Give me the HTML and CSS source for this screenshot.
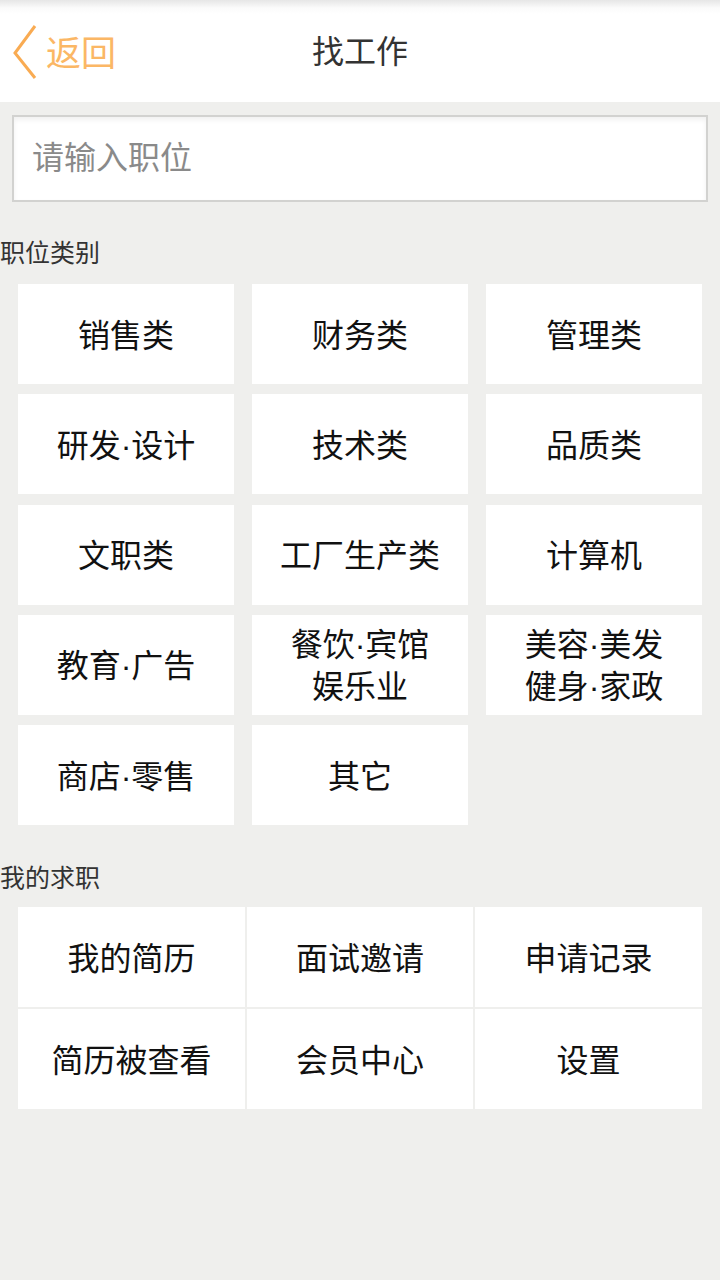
FILE: index.html
```html
<!DOCTYPE html>
<html lang="zh-CN">
<head>
    <meta charset="UTF-8">
    <meta name="viewport" content="width=720">
    <title>找工作</title>
    <link rel="stylesheet" href="styles.css">
</head>
<body>
    <header class="top-bar">
        <a class="back-link" href="#">
            <svg class="back-icon" width="26" height="56" viewBox="0 0 26 56">
                <polyline points="23,2 3,29 23,54" fill="none" stroke="#f9ab52" stroke-width="3"/>
            </svg>
            <span class="back-text">返回</span>
        </a>
        <h1 class="top-title">找工作</h1>
    </header>

    <div class="search-wrap">
        <input class="search-input" type="text" placeholder="请输入职位">
    </div>

    <h2 class="section-title">职位类别</h2>
    <div class="category-grid">
        <div class="category-item">销售类</div>
        <div class="category-item">财务类</div>
        <div class="category-item">管理类</div>
        <div class="category-item">研发·设计</div>
        <div class="category-item">技术类</div>
        <div class="category-item">品质类</div>
        <div class="category-item">文职类</div>
        <div class="category-item">工厂生产类</div>
        <div class="category-item">计算机</div>
        <div class="category-item">教育·广告</div>
        <div class="category-item">餐饮·宾馆<br>娱乐业</div>
        <div class="category-item">美容·美发<br>健身·家政</div>
        <div class="category-item">商店·零售</div>
        <div class="category-item">其它</div>
    </div>

    <h2 class="section-title section-title-mine">我的求职</h2>
    <div class="mine-grid">
        <div class="mine-item">我的简历</div>
        <div class="mine-item">面试邀请</div>
        <div class="mine-item">申请记录</div>
        <div class="mine-item">简历被查看</div>
        <div class="mine-item">会员中心</div>
        <div class="mine-item">设置</div>
    </div>
</body>
</html>
```

FILE: styles.css
```css
* {
    margin: 0;
    padding: 0;
    box-sizing: border-box;
}

body {
    font-family: "Liberation Sans", "Noto Sans CJK SC", sans-serif;
    background: #efefed;
    color: #111;
    width: 720px;
    min-height: 1280px;
}

.top-bar {
    position: relative;
    height: 102px;
    background: linear-gradient(180deg, #e6e6e6 0px, #fbfbfb 8px, #ffffff 14px);
    display: flex;
    align-items: center;
    justify-content: center;
}

.back-link {
    position: absolute;
    left: 12px;
    top: 22px;
    display: flex;
    align-items: center;
    text-decoration: none;
}

.back-text {
    margin-left: 8px;
    padding-top: 4px;
    font-size: 35px;
    line-height: 56px;
    color: #fbb765;
}

.top-title {
    font-size: 32px;
    font-weight: normal;
    color: #333;
    line-height: 1;
    margin-top: 2px;
}

.search-wrap {
    padding: 13px 12px 0 12px;
}

.search-input {
    display: block;
    width: 100%;
    height: 87px;
    border: 2px solid #d2d2d0;
    background: #fff;
    box-shadow: inset 0 3px 5px rgba(0, 0, 0, 0.06);
    padding: 0 18px;
    font-family: inherit;
    font-size: 32px;
    color: #333;
    outline: none;
}

.search-input::placeholder {
    color: #8a8a8a;
}

.section-title {
    font-size: 25px;
    font-weight: normal;
    color: #333;
    line-height: 36px;
    margin-top: 33px;
    height: 49px;
}

.section-title-mine {
    margin-top: 35px;
    height: 47px;
}

.category-grid {
    display: grid;
    grid-template-columns: repeat(3, 216px);
    grid-auto-rows: 100px;
    column-gap: 18px;
    row-gap: 10.3px;
    padding: 0 18px;
}

.category-item,
.mine-item {
    background: #fff;
    display: flex;
    align-items: center;
    justify-content: center;
    text-align: center;
    padding-top: 3px;
    font-size: 32px;
    line-height: 42px;
    color: #111;
}

.mine-grid {
    display: grid;
    grid-template-columns: 227px 226px 227px;
    grid-auto-rows: 100px;
    gap: 2px;
    margin: 0 18px;
    background: #efefed;
}
```
